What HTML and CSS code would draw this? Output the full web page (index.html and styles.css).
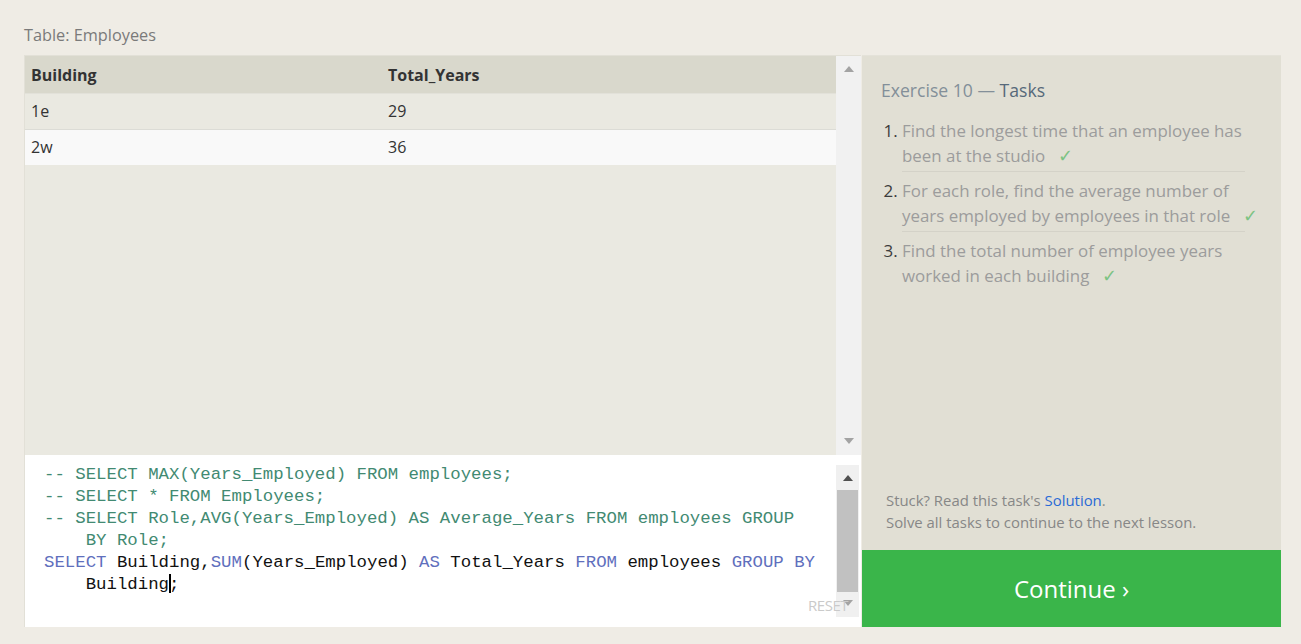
FILE: index.html
```html
<!DOCTYPE html>
<html>
<head>
<meta charset="utf-8">
<link rel="stylesheet" href="styles.css">
</head>
<body>
<div class="page">
  <div class="title">Table: Employees</div>
  <div class="workspace">
    <div class="left">
      <div class="results">
        <div class="table-area">
          <table class="data">
            <thead>
              <tr><th class="c1">Building</th><th>Total_Years</th></tr>
            </thead>
            <tbody>
              <tr class="odd"><td class="c1">1e</td><td>29</td></tr>
              <tr class="even"><td class="c1">2w</td><td>36</td></tr>
            </tbody>
          </table>
        </div>
        <div class="scrollbar light">
          <span class="arrow up grey"></span>
          <span class="arrow down grey"></span>
        </div>
      </div>
      <div class="editor">
        <div class="code">
          <div class="line cm">-- SELECT MAX(Years_Employed) FROM employees;</div>
          <div class="line cm">-- SELECT * FROM Employees;</div>
          <div class="line cm">-- SELECT Role,AVG(Years_Employed) AS Average_Years FROM employees GROUP</div>
          <div class="line cm wrap">BY Role;</div>
          <div class="line"><span class="kw">SELECT</span> Building,<span class="kw">SUM</span>(Years_Employed) <span class="kw">AS</span> Total_Years <span class="kw">FROM</span> employees <span class="kw">GROUP BY</span></div>
          <div class="line wrap">Building<span class="cursor"></span>;</div>
        </div>
        <div class="escroll">
          <div class="etrack">
            <span class="arrow up dark"></span>
            <div class="thumb"></div>
            <span class="arrow down grey"></span>
          </div>
        </div>
        <div class="reset">RESET</div>
      </div>
    </div>
    <div class="right">
      <div class="tasks">
        <h2 class="heading"><span class="ex">Exercise 10 —</span> Tasks</h2>
        <ol class="tasklist">
          <li>Find the longest time that an employee has been at the studio <span class="check">✓</span></li>
          <li>For each role, find the average number of years employed by employees in that role <span class="check">✓</span></li>
          <li class="last">Find the total number of employee years worked in each building <span class="check">✓</span></li>
        </ol>
      </div>
      <div class="help">
        <div>Stuck? Read this task's <a class="link">Solution</a>.</div>
        <div>Solve all tasks to continue to the next lesson.</div>
      </div>
      <div class="continue">Continue ›</div>
    </div>
  </div>
</div>
</body>
</html>
```

FILE: styles.css
```css
html, body {
  margin: 0;
  padding: 0;
  background: #efece5;
  font-family: "Open Sans", "Liberation Sans", sans-serif;
}

.page {
  padding: 22px 0 0 24px;
}

.title {
  height: 33px;
  font-size: 16.3px;
  line-height: 26px;
  color: #7a7a7a;
}

.workspace {
  display: flex;
  height: 572px;
}

.left {
  width: 837px;
  display: flex;
  flex-direction: column;
  box-sizing: border-box;
  border-top: 1px solid #e2e0d7;
  border-left: 1px solid #e2e0d7;
}

.results {
  display: flex;
  height: 399px;
  background: #eae9e1;
}

.table-area {
  flex: 1;
}

.data {
  width: 100%;
  border-collapse: collapse;
  font-size: 16px;
  color: #333;
}

.data th {
  background: #d9d8cc;
  text-align: left;
  font-weight: 700;
  height: 37px;
  padding: 2px 0 0 6px;
  box-sizing: border-box;
  border-bottom: 1px solid #e2e1d9;
}

.data td {
  padding: 0 0 0 6px;
  height: 35px;
}

.data .c1 {
  width: 351px;
}

.data tr.odd td {
  background: #eae9e1;
  border-bottom: 1px solid #dcdcd6;
}

.data tr.even td {
  background: #f9f9f9;
  height: 35px;
}

.scrollbar {
  width: 25px;
  background: #f1f1f1;
  display: flex;
  flex-direction: column;
  justify-content: space-between;
  align-items: center;
  padding: 10px 0 11px;
  box-sizing: border-box;
}

.arrow {
  display: block;
  width: 0;
  height: 0;
  border-left: 5.5px solid transparent;
  border-right: 5.5px solid transparent;
}

.arrow.up.grey { border-bottom: 6px solid #a3a3a3; }
.arrow.down.grey { border-top: 6px solid #a3a3a3; }
.arrow.up.dark { border-bottom: 6px solid #505050; }

.editor {
  position: relative;
  height: 172px;
  background: #ffffff;
  display: flex;
}

.code {
  flex: 1;
  padding: 9px 0 0 19px;
  font-family: "Liberation Mono", "DejaVu Sans Mono", monospace;
  font-size: 17.37px;
  line-height: 22px;
  color: #111;
}

.line {
  white-space: pre;
  height: 22px;
}

.line.wrap {
  padding-left: 41.7px;
}

.cm { color: #428a72; }
.kw { color: #5f6fbd; }

.cursor {
  display: inline-block;
  width: 2px;
  height: 19px;
  background: #000;
  vertical-align: -4px;
  margin-right: -2px;
}

.escroll {
  width: 25px;
  padding-top: 10px;
  padding-bottom: 10px;
  box-sizing: border-box;
}

.etrack {
  width: 23px;
  height: 100%;
  background: #f0f0f0;
  display: flex;
  flex-direction: column;
  align-items: center;
  padding-top: 10px;
  box-sizing: border-box;
}

.thumb {
  width: 21px;
  height: 102px;
  background: #c1c1c1;
  margin-top: 9px;
}

.etrack .arrow.down {
  margin-top: 8px;
}

.reset {
  position: absolute;
  right: 13px;
  bottom: 12px;
  font-size: 15px;
  color: #cacaca;
  letter-spacing: -0.5px;
}

.right {
  width: 419px;
  margin-left: 1px;
  display: flex;
  flex-direction: column;
  background: #e1dfd4;
  border-top: 1px solid #e4e2d9;
  box-sizing: border-box;
}

.tasks {
  flex: 1;
  padding: 21px 18px 0 19px;
}

.heading {
  margin: 0;
  font-size: 17.6px;
  font-weight: 400;
  line-height: 26px;
  color: #56697a;
}

.heading .ex {
  color: #838f99;
}

.tasklist {
  margin: 9px 0 0;
  padding: 0 0 0 21px;
  font-size: 16.9px;
  line-height: 25px;
  color: #9c9c9c;
}

.tasklist li {
  padding: 6px 0 4px;
  background: linear-gradient(#d4d2c8, #d4d2c8) no-repeat left bottom / calc(100% - 18px) 1px;
}

.tasklist li.last {
  background: none;
}

.tasklist li::marker {
  color: #3c3c3c;
}

.check {
  color: #7cc383;
  margin-left: 8px;
  font-size: 18px;
  line-height: 20px;
}

.help {
  padding: 0 0 17px 24px;
  font-size: 14.9px;
  line-height: 22px;
  color: #878787;
}

.link {
  color: #2a6bd6;
}

.continue {
  height: 77px;
  background: #3ab54a;
  color: #ffffff;
  font-size: 24px;
  display: flex;
  align-items: center;
  justify-content: center;
}
```
